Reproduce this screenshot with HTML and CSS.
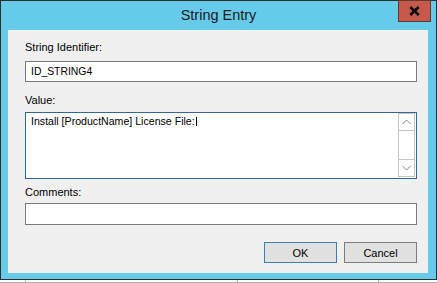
FILE: index.html
```html
<!DOCTYPE html>
<html lang="en">
<head>
    <meta charset="UTF-8">
    <title>String Entry</title>
    <link rel="stylesheet" href="styles.css">
</head>
<body>

    <div class="window">
        <div class="titlebar">
            <span></span>
            <span class="title">String Entry</span>
            <button class="close-btn" aria-label="Close">
                <svg width="11" height="10" viewBox="0 0 11 10">
                    <path d="M1.3 1 L9.7 9 M9.7 1 L1.3 9" stroke="#000" stroke-width="2.6" fill="none"/>
                </svg>
            </button>
        </div>

        <div class="frame">
            <div class="panel">
                <label class="field-label first">String Identifier:</label>
                <div class="textbox">ID_STRING4</div>

                <label class="field-label value-label">Value:</label>
                <div class="memo">
                    <div class="memo-text">Install [ProductName] License File:<span class="caret"></span></div>
                    <div class="scrollbar">
                        <div class="scroll-btn up">
                            <svg width="9" height="6" viewBox="0 0 9 6"><polyline points="0.5,5 4.5,1 8.5,5" stroke="#888" fill="none"/></svg>
                        </div>
                        <div class="scroll-track"></div>
                        <div class="scroll-btn down">
                            <svg width="9" height="6" viewBox="0 0 9 6"><polyline points="0.5,1 4.5,5 8.5,1" stroke="#888" fill="none"/></svg>
                        </div>
                    </div>
                </div>

                <label class="field-label">Comments:</label>
                <div class="textbox comments"></div>

                <div class="buttons">
                    <button class="dlg-btn default">OK</button>
                    <button class="dlg-btn">Cancel</button>
                </div>
            </div>
        </div>
    </div>

    <!-- bit of the window behind the dialog -->
    <div class="desk">
        <div class="cell c1"></div>
        <div class="cell c2"></div>
        <div class="cell c3"></div>
        <div class="cell c4"></div>
    </div>

</body>
</html>
```

FILE: styles.css
```css
body {
    margin: 0;
    background-color: #ffffff;
    font-family: "Liberation Sans", Arial, sans-serif;
    font-size: 11px;
    color: #000;
}

.window {
    width: 437px;
    height: 280px;
    box-sizing: border-box;
    border: 1px solid #2e2e2e;
    background-color: #66cbea;
}

.titlebar {
    height: 29px;
    display: grid;
    grid-template-columns: 1fr auto 1fr;
    align-items: start;
}

.title {
    font-size: 14.5px;
    line-height: 28px;
    color: #1b1b1b;
}

.close-btn {
    justify-self: end;
    width: 33px;
    height: 22px;
    margin: -1px 5px 0 0;
    padding: 0;
    border: 1px solid #5e3a35;
    background-color: #c7584c;
    display: flex;
    align-items: center;
    justify-content: center;
}

.frame {
    padding: 0 8px 6px 7px;
}

.panel {
    height: 243px;
    box-sizing: border-box;
    background-color: #f0f0f0;
    padding: 10px 11px 0 17px;
    display: flex;
    flex-direction: column;
}

.field-label {
    display: block;
    line-height: 15px;
    margin: 6px 0 3px;
}

.field-label.first {
    margin: 0 0 6px;
}

.field-label.value-label {
    margin: 11px 0 4px;
}

.textbox {
    height: 21px;
    box-sizing: border-box;
    border: 1px solid #7a7a7a;
    background-color: #fff;
    padding-left: 5px;
    font-size: 10.4px;
    line-height: 19px;
}

.textbox.comments {
    height: 22px;
}

.memo {
    height: 67px;
    box-sizing: border-box;
    border: 1px solid #33679c;
    background-color: #fff;
    display: flex;
}

.memo-text {
    flex: 1;
    padding: 1px 5px 0;
    font-size: 10.6px;
    line-height: 15px;
}

.caret {
    display: inline-block;
    width: 1px;
    height: 9px;
    background-color: #000;
    margin-left: 1px;
    vertical-align: -1px;
}

.scrollbar {
    width: 17px;
    margin: 0 1px 1px 0;
    box-sizing: border-box;
    border: 1px solid #c6c6c6;
    display: flex;
    flex-direction: column;
}

.scroll-btn {
    height: 16px;
    display: flex;
    align-items: center;
    justify-content: center;
}

.scroll-btn.up {
    border-bottom: 1px solid #c6c6c6;
}

.scroll-btn.down {
    border-top: 1px solid #c6c6c6;
}

.scroll-track {
    flex: 1;
}

.buttons {
    margin-top: 17px;
    display: flex;
    justify-content: flex-end;
    gap: 7px;
}

.dlg-btn {
    width: 73px;
    height: 21px;
    padding: 0;
    font-family: inherit;
    font-size: 11px;
    color: #000;
    background-color: #e1e1e1;
    border: 1px solid #7d7d7d;
}

.dlg-btn.default {
    border-color: #3c7fb1;
}

.desk {
    height: 3px;
    box-sizing: border-box;
    border-bottom: 1px solid #b4b4b4;
    display: flex;
}

.cell {
    border-right: 1px solid #b4b4b4;
}

.c1 { width: 25px; }
.c2 { width: 211px; }
.c3 { width: 140px; }
.c4 { flex: 1; border-right: none; }
```
